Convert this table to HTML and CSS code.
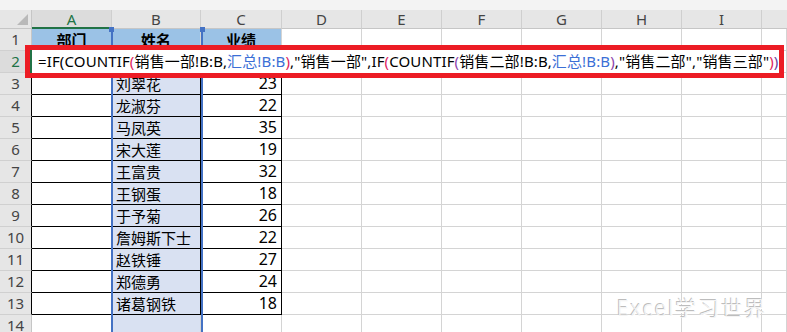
FILE: index.html
```html
<!DOCTYPE html>
<html lang="zh">
<head>
<meta charset="utf-8">
<link rel="stylesheet" href="styles.css">
</head>
<body>
<div class="sheet">
  <div class="topstrip"></div>
  <div class="grid">
    <div class="corner"><span class="tri"></span></div>
    <div class="ch sel">A</div><div class="ch">B</div><div class="ch">C</div><div class="ch">D</div><div class="ch">E</div><div class="ch">F</div><div class="ch">G</div><div class="ch">H</div><div class="ch">I</div><div class="ch last"></div>

    <div class="rh">1</div>
    <div class="c hd">部门</div><div class="c hd">姓名</div><div class="c hd">业绩</div>
    <div class="c"></div><div class="c"></div><div class="c"></div><div class="c"></div><div class="c"></div><div class="c"></div><div class="c"></div>

    <div class="rh selr">2</div>
    <div class="c tb"></div><div class="c tb"></div><div class="c tb"></div>
    <div class="c"></div><div class="c"></div><div class="c"></div><div class="c"></div><div class="c"></div><div class="c"></div><div class="c"></div>

    <div class="rh tr">3</div><div class="c t"></div><div class="c t nm">刘翠花</div><div class="c t num">23</div>
    <div class="c"></div><div class="c"></div><div class="c"></div><div class="c"></div><div class="c"></div><div class="c"></div><div class="c"></div>

    <div class="rh tr">4</div><div class="c t"></div><div class="c t nm">龙淑芬</div><div class="c t num">22</div>
    <div class="c"></div><div class="c"></div><div class="c"></div><div class="c"></div><div class="c"></div><div class="c"></div><div class="c"></div>

    <div class="rh tr">5</div><div class="c t"></div><div class="c t nm">马凤英</div><div class="c t num">35</div>
    <div class="c"></div><div class="c"></div><div class="c"></div><div class="c"></div><div class="c"></div><div class="c"></div><div class="c"></div>

    <div class="rh tr">6</div><div class="c t"></div><div class="c t nm">宋大莲</div><div class="c t num">19</div>
    <div class="c"></div><div class="c"></div><div class="c"></div><div class="c"></div><div class="c"></div><div class="c"></div><div class="c"></div>

    <div class="rh tr">7</div><div class="c t"></div><div class="c t nm">王富贵</div><div class="c t num">32</div>
    <div class="c"></div><div class="c"></div><div class="c"></div><div class="c"></div><div class="c"></div><div class="c"></div><div class="c"></div>

    <div class="rh tr">8</div><div class="c t"></div><div class="c t nm">王钢蛋</div><div class="c t num">18</div>
    <div class="c"></div><div class="c"></div><div class="c"></div><div class="c"></div><div class="c"></div><div class="c"></div><div class="c"></div>

    <div class="rh tr">9</div><div class="c t"></div><div class="c t nm">于予菊</div><div class="c t num">26</div>
    <div class="c"></div><div class="c"></div><div class="c"></div><div class="c"></div><div class="c"></div><div class="c"></div><div class="c"></div>

    <div class="rh tr">10</div><div class="c t"></div><div class="c t nm">詹姆斯下士</div><div class="c t num">22</div>
    <div class="c"></div><div class="c"></div><div class="c"></div><div class="c"></div><div class="c"></div><div class="c"></div><div class="c"></div>

    <div class="rh tr">11</div><div class="c t"></div><div class="c t nm">赵铁锤</div><div class="c t num">27</div>
    <div class="c"></div><div class="c"></div><div class="c"></div><div class="c"></div><div class="c"></div><div class="c"></div><div class="c"></div>

    <div class="rh tr">12</div><div class="c t"></div><div class="c t nm">郑德勇</div><div class="c t num">24</div>
    <div class="c"></div><div class="c"></div><div class="c"></div><div class="c"></div><div class="c"></div><div class="c"></div><div class="c"></div>

    <div class="rh tr">13</div><div class="c t"></div><div class="c t nm">诸葛钢铁</div><div class="c t num">18</div>
    <div class="c"></div><div class="c"></div><div class="c"></div><div class="c"></div><div class="c"></div><div class="c"></div><div class="c"></div>

    <div class="rh">14</div><div class="c"></div><div class="c bcol"></div><div class="c"></div>
    <div class="c"></div><div class="c"></div><div class="c"></div><div class="c"></div><div class="c"></div><div class="c"></div><div class="c"></div>
  </div>

  <div class="refbox"><span class="h hl"></span><span class="h hr"></span></div>

  <div class="editor">=IF(COUNTIF<span class="p2">(</span>销售一部!B:B,<span class="rf">汇总!B:B</span><span class="p2">)</span>,"销售一部",IF<span class="p2">(</span>COUNTIF<span class="p3">(</span>销售二部!B:B,<span class="rf">汇总!B:B</span><span class="p3">)</span>,"销售二部","销售三部"<span class="p2">)</span><span class="pe">)</span></div>
  <div class="redbox"></div>
  <div class="watermark">Excel学习世界</div>
</div>
</body>
</html>
```
FILE: styles.css
```css
* { box-sizing: border-box; margin: 0; padding: 0; }
html, body { width: 787px; height: 332px; overflow: hidden; background: #fff; }
body { font-family: "Noto Sans", "Noto Sans CJK SC", sans-serif; color: #000; }

.sheet { position: relative; width: 787px; height: 332px; overflow: hidden; }

.topstrip { height: 10px; background: #f3f3f3; }

.grid {
  display: grid;
  grid-template-columns: 32px 80px 89px 81px repeat(6, 80px) 25px;
  grid-template-rows: 19px repeat(14, 22px);
}

.corner { background: #e6e6e6; border-right: 1px solid #c6c6c6; border-bottom: 1px solid #c6c6c6; position: relative; }
.tri { position: absolute; right: 3px; bottom: 3px; width: 0; height: 0; border-left: 11px solid transparent; border-bottom: 11px solid #b9b9b9; }

.ch {
  background: #e6e6e6;
  border-right: 1px solid #cfcfcf;
  border-bottom: 1px solid #c6c6c6;
  font-size: 15px; line-height: 18px; color: #444;
  text-align: center;
}
.ch.sel { color: #217346; border-bottom: 2px solid #217346; background: #dcdcdc; }
.ch.last { border-right: none; }

.rh {
  background: #e6e6e6;
  border-right: 1px solid #c6c6c6;
  border-bottom: 1px solid #d0d0d0;
  font-size: 15px; line-height: 21px; color: #444;
  text-align: center;
}
.rh.selr { color: #217346; background: #dcdcdc; }
.rh.tr { border-right-color: #000; }

.c {
  border-right: 1px solid #d4d4d4;
  border-bottom: 1px solid #d4d4d4;
  font-family: "Noto Sans CJK SC", sans-serif;
  font-size: 15px; line-height: 21px;
  white-space: nowrap; overflow: hidden;
}
.c.hd { background: #9bc2e6; font-weight: bold; text-align: center; border-bottom-color: #000; }
.c.tb { border-bottom-color: #000; }
.c.t { border-right-color: #000; border-bottom-color: #000; }
.c.nm { padding-left: 4px; background: #d9e1f2; }
.c.bcol { background: #d9e1f2; }
.c.num { text-align: right; padding-right: 4px; font-family: "Noto Sans", sans-serif; font-size: 16px; }

.refbox {
  position: absolute; left: 111px; top: 29px; width: 92px; height: 310px;
  border-left: 2px solid #4472c4; border-right: 2px solid #4472c4;
}
.h { position: absolute; top: -2px; width: 5px; height: 5px; background: #4472c4; }
.hl { left: -4px; }
.hr { right: -4px; }

.editor {
  position: absolute; left: 30px; top: 50px; width: 750px; height: 23px;
  background: #fff; border-left: 2px solid #217346;
  padding-left: 6px;
  font-family: "Noto Sans", "Noto Sans CJK SC", sans-serif;
  font-size: 15px; letter-spacing: 0.13px; line-height: 23px; white-space: nowrap; color: #000;
}
.p2 { color: #e0245e; }
.p3 { color: #8e44ad; }
.rf { color: #3b6fd6; }
.pe { color: #6a3fa0; }

.redbox {
  position: absolute; left: 25px; top: 45px; width: 759px; height: 33px;
  border: 5px solid #ec1c24;
}

.watermark {
  position: absolute; left: 617px; top: 292px;
  font-family: "Noto Sans", "Noto Sans CJK SC", sans-serif; font-weight: 300;
  font-size: 21px; letter-spacing: 2px; color: #f4f4f4;
  text-shadow: -1px -1px 0 #bdbdbd, 1px 1px 0 #fff;
}
```
